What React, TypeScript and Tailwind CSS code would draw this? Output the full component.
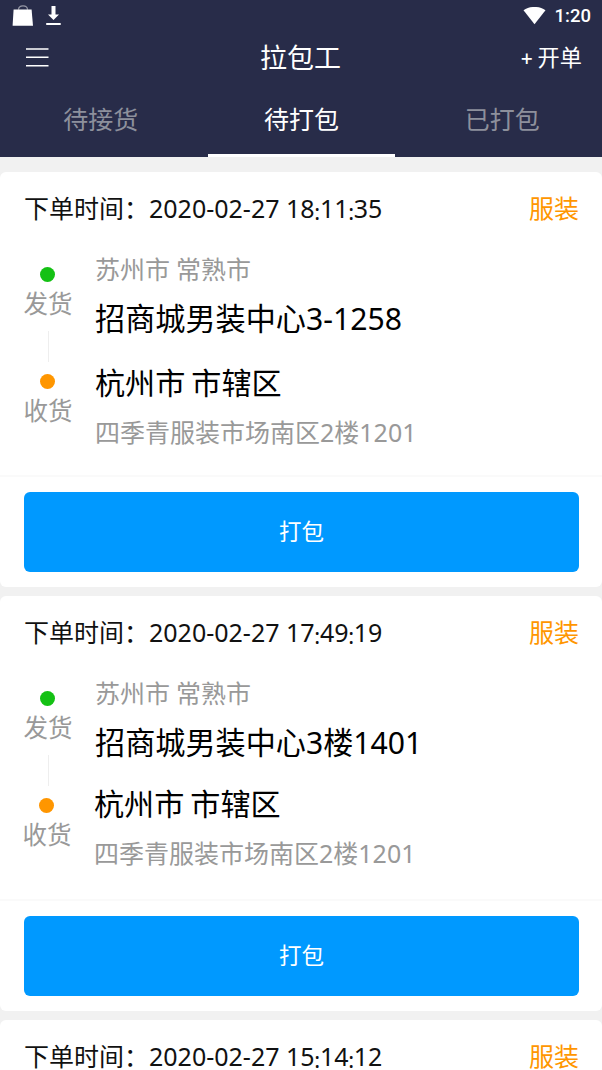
import clsx from 'clsx';

type Order = {
  id: number;
  date: string;
  time: string;
  category: string;
  fromCity: string;
  fromAddress: string;
  toCity: string;
  toAddress: string;
  compact?: boolean;
};

const orders: Order[] = [
  {
    id: 1,
    date: '2020-02-27',
    time: '18:11:35',
    category: '服装',
    fromCity: '苏州市 常熟市',
    fromAddress: '招商城男装中心3-1258',
    toCity: '杭州市 市辖区',
    toAddress: '四季青服装市场南区2楼1201',
  },
  {
    id: 2,
    date: '2020-02-27',
    time: '17:49:19',
    category: '服装',
    fromCity: '苏州市 常熟市',
    fromAddress: '招商城男装中心3楼1401',
    toCity: '杭州市 市辖区',
    toAddress: '四季青服装市场南区2楼1201',
    compact: true,
  },
];

const nextOrder = {
  date: '2020-02-27',
  time: '15:14:12',
  category: '服装',
};

const tabs = ['待接货', '待打包', '已打包'];

function StatusBar() {
  return (
    <div className="flex h-[31px] items-center justify-between pr-[11px] pl-3 text-white">
      <div className="flex items-center gap-3">
        <svg width="22" height="22" viewBox="0 0 22 22" fill="none">
          <path d="M1.6 4.4h18L21 20.8H.6z" fill="currentColor" />
          <path d="M6.500 4.800C6.500-.4 15.500-.4 15.500 4.800" stroke="currentColor" strokeOpacity=".5" strokeWidth="1.2" />
        </svg>
        <svg width="15" height="20" viewBox="0 0 15 20" fill="currentColor">
          <path d="M5.500 0h4v8.500h3.500L7.500 14 2 8.500h3.500z" />
          <path d="M.2 17h14.500v2H.2z" />
        </svg>
      </div>
      <div className="flex items-center gap-[9px]">
        <svg width="23" height="18" viewBox="0 0 23 18" fill="currentColor">
          <path d="M.5 3.300C6.500-1.200 16.500-1.200 22.500 3.300L11.500 17.200z" />
        </svg>
        <span className="pt-px font-['Roboto',sans-serif] text-[18.5px] leading-6 font-medium">1:20</span>
      </div>
    </div>
  );
}

function Header() {
  return (
    <header className="h-[157px] bg-[#282c49] text-white">
      <StatusBar />
      <div className="grid h-[53px] grid-cols-3 items-center pr-5 pl-[26px]">
        <svg width="23" height="20" viewBox="0 0 23 20" stroke="currentColor" strokeWidth="1.5">
          <path d="M0 1h22.500M0 9.300h22.500M0 17.700h22.500" />
        </svg>
        <h1 className="-ml-[7px] text-center text-[27px] leading-10">拉包工</h1>
        <button className="text-right text-[22.2px] leading-10 [word-spacing:-1px]">
          <span className="text-[21px] font-medium">+</span> 开单
        </button>
      </div>
      <nav className="flex h-[73px]">
        {tabs.map((tab, i) => (
          <div
            key={tab}
            className={clsx(
              'flex flex-1 flex-col items-center justify-between pt-[14px] text-[25px] leading-[42px]',
              i === 1 ? 'text-white' : 'text-[#8d909c]'
            )}
          >
            <span className="pl-px">{tab}</span>
            {i === 1 && <span className="h-[3px] w-[187px] bg-white" />}
          </div>
        ))}
      </nav>
    </header>
  );
}

function Time({ value }: { value: string }) {
  // colons are smaller and sit slightly below the digits
  return (
    <>
      {value.split('').map((c, i) =>
        c === ':' ? (
          <span key={i} className="relative top-0.5 -mr-[0.3px] -ml-[0.4px] text-[22px] leading-none">:</span>
        ) : (
          c
        )
      )}
    </>
  );
}

function CardHeader({ date, time, category }: { date: string; time: string; category: string }) {
  return (
    <div className="flex h-[75px] items-start justify-between pt-[23px] pr-[23px] pl-6 text-[25px] leading-[26px]">
      <p className="whitespace-nowrap text-[#111]">
        下单时间：{date} <Time value={time} />
      </p>
      <span className="text-[#ff9600]">{category}</span>
    </div>
  );
}

function Stop({ label, color }: { label: string; color: string }) {
  return (
    <div className="flex w-12 flex-col items-center">
      <span className={clsx('mr-[2px] size-[15px] rounded-full', color)} />
      <span className="mt-1 text-[24.5px] leading-9 whitespace-nowrap text-[#999]">{label}</span>
    </div>
  );
}

function OrderCard({ order }: { order: Order }) {
  return (
    <section className="h-[415px] rounded-md bg-white">
      <CardHeader date={order.date} time={order.time} category={order.category} />

      <div className="flex h-[228px] pl-6">
        <div className="w-12 shrink-0 pt-5">
          <Stop label="发货" color="bg-[#14c114]" />
          <div className="mx-auto mt-[9px] h-[31px] w-px bg-[#eee]" />
          <div className={clsx('mt-[12px]', order.compact && '-ml-px')}>
            <Stop label="收货" color="bg-[#ff9600]" />
          </div>
        </div>
        <div className="ml-[23px] whitespace-nowrap">
          <p className="pt-[2px] text-[25px] leading-10 text-[#999] [word-spacing:-0.5px]">{order.fromCity}</p>
          <p className="pt-[5px] text-[30.15px] leading-[50px] text-black">{order.fromAddress}</p>
          <div className={clsx(order.compact ? '-ml-px pt-[11px]' : 'pt-[14px]')}>
            <p className="text-[30.1px] leading-[50px] text-black [word-spacing:-1.8px]">{order.toCity}</p>
            <p className="pt-1 text-[25px] leading-10 text-[#999]">{order.toAddress}</p>
          </div>
        </div>
      </div>

      <div className="border-t-2 border-[#fafafa] pt-[15px] pr-[23px] pl-6">
        <button className="h-20 w-full rounded-md bg-[#0099ff] text-[22.5px] text-white">打包</button>
      </div>
    </section>
  );
}

export default function App() {
  return (
    <div className="h-[1070px] overflow-hidden bg-[#f1f1f1] font-['Noto_Sans','Noto_Sans_CJK_SC',sans-serif]">
      <Header />
      <main className="flex flex-col gap-[9px] pt-[15px]">
        {orders.map((order) => (
          <OrderCard key={order.id} order={order} />
        ))}
        <section className="h-[50px] rounded-t-md bg-white">
          <CardHeader {...nextOrder} />
        </section>
      </main>
    </div>
  );
}
